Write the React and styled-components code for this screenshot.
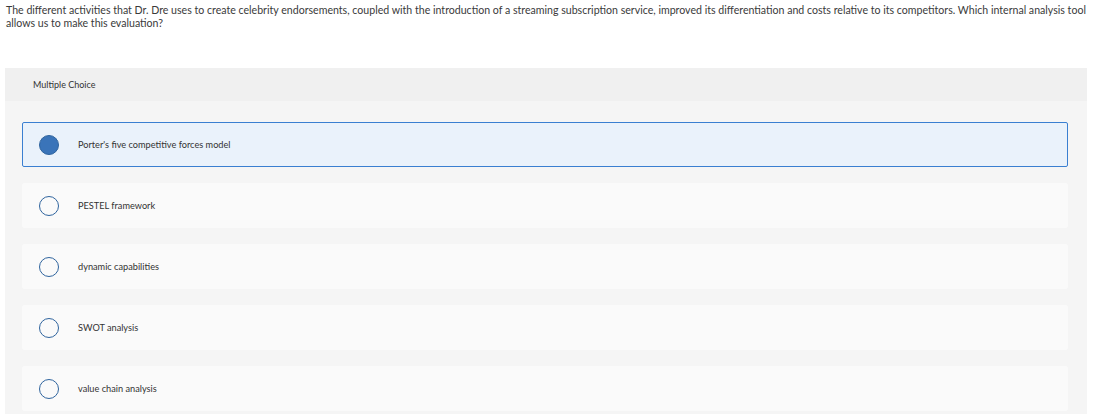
import styled, { createGlobalStyle } from "styled-components";
import { useState } from "react";

const options = [
  "Porter's five competitive forces model",
  "PESTEL framework",
  "dynamic capabilities",
  "SWOT analysis",
  "value chain analysis",
];

const App = () => {
  const [selected, setSelected] = useState(0);

  return (
    <Page>
      <GlobalStyle />
      <Question>
        The different activities that Dr. Dre uses to create celebrity endorsements, coupled with the
        introduction of a streaming subscription service, improved its differentiation and costs relative
        to its competitors. Which internal analysis tool allows us to make this evaluation?
      </Question>
      <Panel>
        <Header>Multiple Choice</Header>
        <Body>
          {options.map((text, i) => (
            <Option key={text} $active={i === selected} onClick={() => setSelected(i)}>
              <Radio $active={i === selected} />
              <Label>{text}</Label>
            </Option>
          ))}
        </Body>
      </Panel>
    </Page>
  );
};

const GlobalStyle = createGlobalStyle`
  html, body {
    margin: 0;
    padding: 0;
    background: #ffffff;
  }
  body {
    font-family: Lato, "Liberation Sans", sans-serif;
    color: #333333;
  }
`;

const Page = styled.div`
  width: 1093px;
  height: 414px;
  overflow: hidden;
  padding: 4px 6px 0 5px;
  box-sizing: border-box;
`;

const Question = styled.p`
  margin: 0 0 38px 1px;
  font-size: 10.6px;
  line-height: 13px;
  color: #3a3a3a;
`;

const Panel = styled.div`
  width: 1082px;
  background: #f5f5f5;
`;

const Header = styled.div`
  height: 33px;
  background: #f0f0f0;
  display: flex;
  align-items: center;
  padding-left: 28px;
  font-size: 9px;
  color: #333333;
`;

const Body = styled.div`
  display: flex;
  flex-direction: column;
  gap: 16px;
  padding: 21px 19px 20px 17px;
`;

const Option = styled.div`
  height: 45px;
  box-sizing: border-box;
  display: flex;
  align-items: center;
  padding-left: 16px;
  border-radius: 2px;
  cursor: pointer;
  background: ${(p) => (p.$active ? "#eaf2fb" : "#fafafa")};
  border: 1px solid ${(p) => (p.$active ? "#3a7fd1" : "#fafafa")};
`;

const Radio = styled.span`
  width: 20px;
  height: 20px;
  box-sizing: border-box;
  border-radius: 50%;
  flex-shrink: 0;
  border: 1.5px solid #2f649e;
  background: ${(p) => (p.$active ? "#3a74b9" : "transparent")};
`;

const Label = styled.span`
  margin-left: 19px;
  font-size: 9.2px;
  color: #333333;
`;

export default App;
